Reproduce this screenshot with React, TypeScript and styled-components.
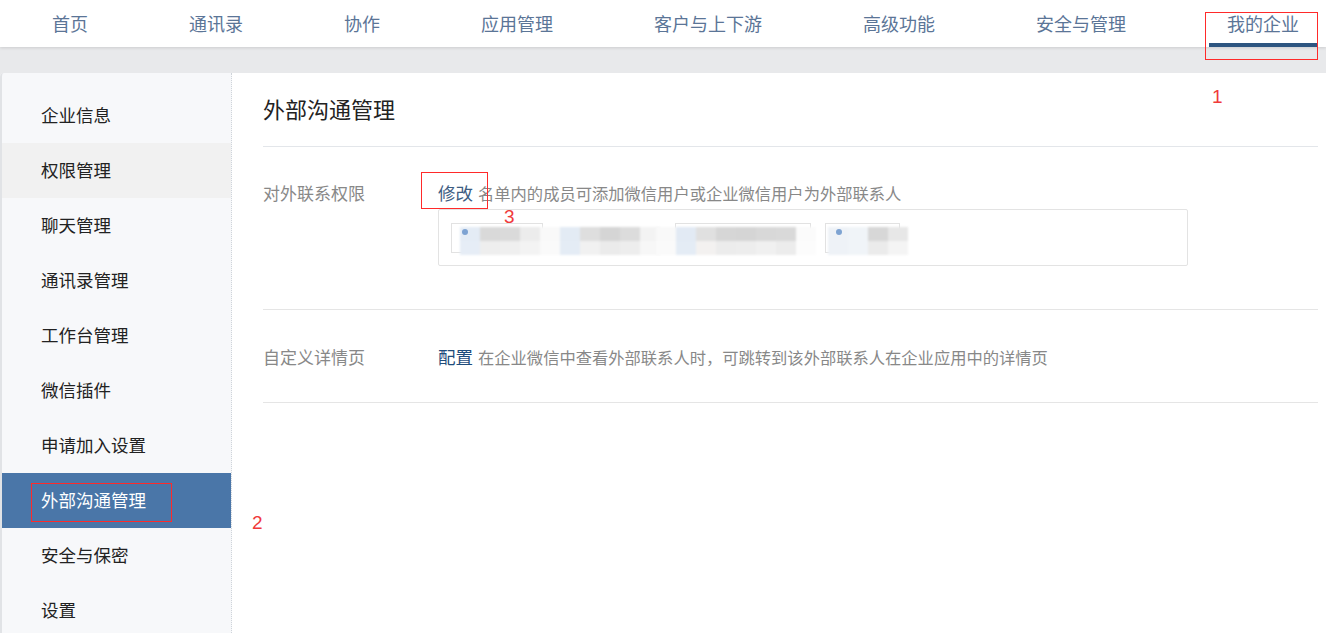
import React from 'react'
import styled, { createGlobalStyle } from 'styled-components'

const GlobalStyle = createGlobalStyle`
  html, body {
    margin: 0;
    padding: 0;
    background: #e8e9eb;
  }
  body {
    font-family: "Microsoft YaHei", "Noto Sans CJK SC", "Noto Sans", sans-serif;
  }
`

const navItems = ['首页', '通讯录', '协作', '应用管理', '客户与上下游', '高级功能', '安全与管理', '我的企业']
const menuItems = ['企业信息', '权限管理', '聊天管理', '通讯录管理', '工作台管理', '微信插件', '申请加入设置', '外部沟通管理', '安全与保密', '设置']

const Page = styled.div`
  position: relative;
  width: 1326px;
  height: 633px;
  overflow: hidden;
  background: #e8e9eb;
`

const TopBar = styled.nav`
  display: flex;
  gap: 65px;
  height: 47px;
  padding-left: 34px;
  background: #fff;
  box-shadow: 0 1px 3px rgba(0, 0, 0, 0.12);
  position: relative;
  z-index: 1;
`

const NavItem = styled.div<{ $active?: boolean }>`
  display: flex;
  align-items: center;
  box-sizing: border-box;
  height: 47px;
  padding: 2px 18px 0;
  font-size: 18px;
  color: #5b7597;
  white-space: nowrap;
  border-bottom: 4px solid ${(p) => (p.$active ? '#2d5580' : 'transparent')};
`

const Body = styled.div`
  display: flex;
  margin-top: 26px;
  height: 560px;
  background: #fff;
  border-top-left-radius: 4px;
`

const Sidebar = styled.aside`
  width: 229px;
  flex-shrink: 0;
  padding-top: 15px;
  background: #f7f8fa;
  border-left: 2px solid #e1e3e6;
  border-right: 1px dotted #cfd4da;
  border-top-left-radius: 4px;
`

const MenuItem = styled.div<{ $state?: 'hover' | 'active' }>`
  display: flex;
  align-items: center;
  height: 55px;
  padding-left: 39px;
  padding-bottom: 2px;
  box-sizing: border-box;
  font-size: 17.5px;
  color: ${(p) => (p.$state === 'active' ? '#fff' : '#222')};
  background: ${(p) =>
    p.$state === 'active' ? '#4a76a8' : p.$state === 'hover' ? '#f1f1f1' : 'transparent'};
`

const Main = styled.main`
  flex: 1;
  padding: 0 8px 0 31px;
`

const Title = styled.h1`
  margin: 0;
  height: 74px;
  padding-bottom: 3px;
  box-sizing: border-box;
  display: flex;
  align-items: center;
  font-size: 22px;
  font-weight: normal;
  color: #222;
  border-bottom: 1px solid #e3e6ea;
`

const Row = styled.div<{ $height: number }>`
  display: flex;
  height: ${(p) => p.$height}px;
  border-bottom: 1px solid #e5e5e5;
  box-sizing: border-box;
`

const Label = styled.div<{ $top: number }>`
  width: 175px;
  flex-shrink: 0;
  padding-top: ${(p) => p.$top}px;
  font-size: 17px;
  color: #888;
`

const Field = styled.div<{ $top: number }>`
  flex: 1;
  padding-top: ${(p) => p.$top}px;
`

const Line = styled.div`
  display: flex;
  align-items: baseline;
  gap: 5px;
`

const Link = styled.span<{ $tone?: string }>`
  font-size: 17.5px;
  color: ${(p) => p.$tone || '#3d5d82'};
`

const Hint = styled.span`
  font-size: 16.3px;
  color: #888;
`

const TagBox = styled.div`
  margin-top: 4px;
  width: 750px;
  height: 57px;
  border: 1px solid #e3e3e3;
  border-radius: 2px;
  box-sizing: border-box;
  display: flex;
  align-items: center;
  padding-left: 12px;
`

const Tag = styled.div<{ $w: number; $gap: number }>`
  position: relative;
  width: ${(p) => p.$w}px;
  height: 30px;
  margin-right: ${(p) => p.$gap}px;
  border: 1px solid #e2e2e2;
  box-sizing: border-box;
  display: flex;
`

const Mosaic = styled.div`
  position: absolute;
  left: 8px;
  top: 3px;
  display: grid;
  grid-template-rows: 14px 14px;
  grid-auto-flow: column;
  grid-auto-columns: 20px;
  filter: blur(1.2px);
`

const Cell = styled.div<{ $c: string }>`
  background: ${(p) => p.$c};
`

const Dot = styled.span`
  position: absolute;
  left: 10px;
  top: 5px;
  width: 6px;
  height: 6px;
  border-radius: 50%;
  background: #7ea3d2;
  z-index: 1;
`

const Annot = styled.div`
  position: absolute;
  z-index: 5;
  border: 1px solid #ff2a2a;
  pointer-events: none;
`

const AnnotNum = styled.div`
  position: absolute;
  z-index: 5;
  color: #f03a3a;
  font-family: "Liberation Sans", Arial, sans-serif;
  font-size: 19px;
  line-height: 1;
`

const palettes: string[][] = [
  ['#e4ecf5', '#e6edf6', '#d9d9d9', '#eeeeee', '#dadada', '#efefef', '#ececec', '#f3f3f3', '#f9f9f9', '#fafafa', '#e3ebf4', '#e4ecf5', '#dedede', '#f1f1f1', '#d5d5d5', '#ebebeb', '#dcdcdc', '#ededed', '#f3f3f3', '#f7f7f7'],
  ['#f9f9f9', '#fafafa', '#e2eaf4', '#e4ecf5', '#e0e0e0', '#f3f1f0', '#d6d6d6', '#ececec', '#d5d5d5', '#ededed', '#d8d8d8', '#f0f0f0', '#d9d9d9', '#ececec', '#fbfbfb', '#fcfcfc'],
  ['#eef2f7', '#eef2f7', '#f0f4f8', '#f0f4f8', '#d7d7d7', '#ebebeb', '#e7e7e7', '#f4f4f4'],
]

const tags = [
  { w: 92, gap: 132, p: palettes[0], dot: true, left: 8 },
  { w: 136, gap: 14, p: palettes[1], dot: false, left: -20 },
  { w: 75, gap: 0, p: palettes[2], dot: true, left: 2 },
]

export default function App() {
  return (
    <>
      <GlobalStyle />
      <Page>
        <TopBar>
          {navItems.map((n) => (
            <NavItem key={n} $active={n === '我的企业'}>
              {n}
            </NavItem>
          ))}
        </TopBar>
        <Body>
          <Sidebar>
            {menuItems.map((m) => (
              <MenuItem
                key={m}
                $state={m === '外部沟通管理' ? 'active' : m === '权限管理' ? 'hover' : undefined}
              >
                {m}
              </MenuItem>
            ))}
          </Sidebar>
          <Main>
            <Title>外部沟通管理</Title>
            <Row $height={163}>
              <Label $top={33}>对外联系权限</Label>
              <Field $top={33}>
                <Line>
                  <Link>修改</Link>
                  <Hint>名单内的成员可添加微信用户或企业微信用户为外部联系人</Hint>
                </Line>
                <TagBox>
                  {tags.map((t, i) => (
                    <Tag key={i} $w={t.w} $gap={t.gap}>
                      {t.dot && <Dot />}
                      <Mosaic style={{ left: t.left }}>
                        {t.p.map((c, j) => (
                          <Cell key={j} $c={c} />
                        ))}
                      </Mosaic>
                    </Tag>
                  ))}
                </TagBox>
              </Field>
            </Row>
            <Row $height={93}>
              <Label $top={34}>自定义详情页</Label>
              <Field $top={34}>
                <Line>
                  <Link $tone="#1f4c7c">配置</Link>
                  <Hint>在企业微信中查看外部联系人时，可跳转到该外部联系人在企业应用中的详情页</Hint>
                </Line>
              </Field>
            </Row>
          </Main>
        </Body>
        <Annot style={{ left: 1205, top: 12, width: 111, height: 46 }} />
        <Annot style={{ left: 31, top: 483, width: 139, height: 37 }} />
        <Annot style={{ left: 421, top: 172, width: 65, height: 35 }} />
        <AnnotNum style={{ left: 1212, top: 87 }}>1</AnnotNum>
        <AnnotNum style={{ left: 252, top: 513 }}>2</AnnotNum>
        <AnnotNum style={{ left: 504, top: 207 }}>3</AnnotNum>
      </Page>
    </>
  )
}
